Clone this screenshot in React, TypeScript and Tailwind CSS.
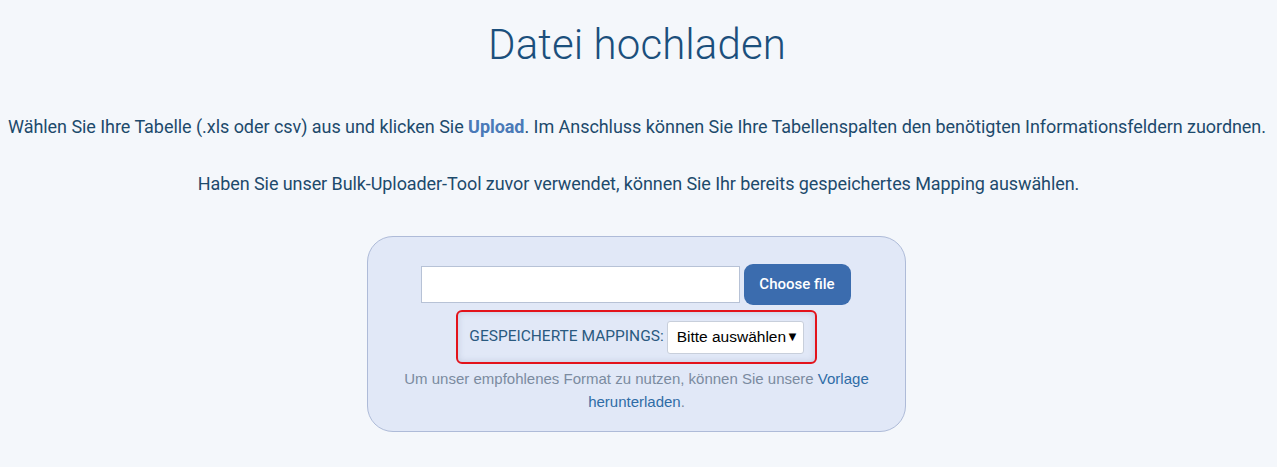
import React from "react";

export default function App() {
  return (
    <div className="min-h-[467px] w-full bg-[#f4f7fb] flex flex-col items-center" style={{ fontFamily: "Roboto, 'Noto Sans', sans-serif" }}>
      <h1 className="mt-[19px] text-[42px] leading-[52px] font-light text-[#1b4f7c] tracking-[0.1px] mr-[3px]">Datei hochladen</h1>
      <p className="mt-[43px] text-[18px] leading-[26px] text-[#1d4a6c] text-center tracking-[-0.05px] whitespace-nowrap mr-[3px]">
        Wählen Sie Ihre Tabelle (.xls oder csv) aus und klicken Sie <span className="font-bold text-[#4a7ab8]">Upload</span>. Im Anschluss können Sie Ihre Tabellenspalten den benötigten Informationsfeldern zuordnen.
      </p>
      <p className="mt-[31px] text-[18px] leading-[26px] text-[#1d4a6c] text-center tracking-[-0.08px]">
        Haben Sie unser Bulk-Uploader-Tool zuvor verwendet, können Sie Ihr bereits gespeichertes Mapping auswählen.
      </p>
      <div className="mt-[39px] w-[539px] h-[196px] rounded-[26px] border border-[#aebbd8] bg-[#e1e8f7] flex flex-col items-center pt-[27px] mr-[4px]">
        <div className="flex items-center gap-[4px] mr-[2px]">
          <div className="w-[319px] h-[37px] bg-white border border-[#b7c2d6]" />
          <button className="w-[107px] h-[41px] rounded-[9px] bg-[#3b6cae] text-white text-[15px] font-medium">Choose file</button>
        </div>
        <div className="mt-[5px] w-[361px] h-[54px] rounded-[6px] border-2 border-[#e3131b] shadow-[inset_0_0_6px_rgba(90,110,150,0.25)] flex items-center justify-center gap-[3px]">
          <span className="text-[15.5px] text-[#2a5a80]">GESPEICHERTE MAPPINGS:</span>
          <div className="w-[137px] h-[33px] bg-white rounded-[3px] border border-[#c8cfdb] flex items-center pl-[9px] text-[15.5px] text-black" style={{ fontFamily: "'Liberation Sans', Arial, sans-serif" }}>
            Bitte auswählen<span className="text-[13px]">▼</span>
          </div>
        </div>
        <p className="mt-[3px] w-[480px] text-center text-[15px] leading-[23px] text-[#7b8ba0]" style={{ fontFamily: "'Liberation Sans', Arial, sans-serif" }}>
          Um unser empfohlenes Format zu nutzen, können Sie unsere <span className="text-[#2f6ca6]">Vorlage</span>
          <br />
          <span className="text-[#2f6ca6]">herunterladen</span>.
        </p>
      </div>
    </div>
  );
}
